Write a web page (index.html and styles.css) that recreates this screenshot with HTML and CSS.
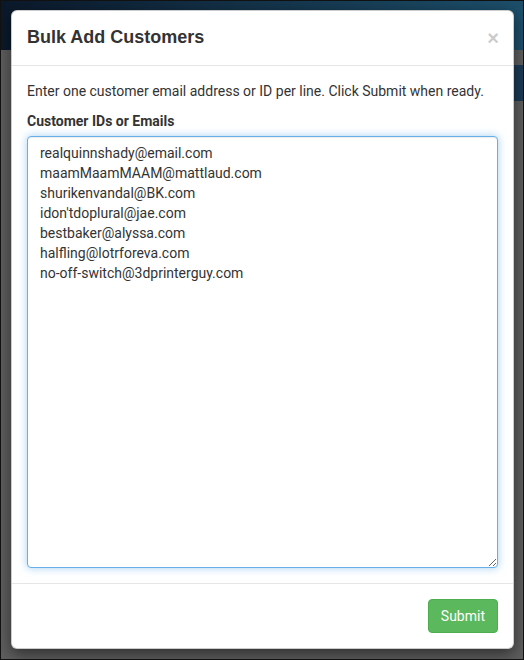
FILE: index.html
```html
<!DOCTYPE html>
<html lang="en">
<head>
    <meta charset="UTF-8">
    <meta name="viewport" content="width=device-width, initial-scale=1.0">
    <title>Bulk Add Customers</title>
    <link rel="stylesheet" href="styles.css">
</head>
<body>
    <div class="screen">
        <!-- Modal -->
        <div class="modal-content">
            <div class="modal-header">
                <h4 class="modal-title">Bulk Add Customers</h4>
                <button class="close" type="button">&times;</button>
            </div>
            <div class="modal-body">
                <p>Enter one customer email address or ID per line. Click Submit when ready.</p>
                <label for="customers">Customer IDs or Emails</label>
                <textarea id="customers" class="form-control is-focused">realquinnshady@email.com
maamMaamMAAM@mattlaud.com
shurikenvandal@BK.com
idon'tdoplural@jae.com
bestbaker@alyssa.com
halfling@lotrforeva.com
no-off-switch@3dprinterguy.com</textarea>
            </div>
            <div class="modal-footer">
                <button class="btn btn-success" type="button">Submit</button>
            </div>
        </div>
    </div>
</body>
</html>
```

FILE: styles.css
```css
body {
    margin: 0;
    padding: 0;
    font-family: Roboto, "Liberation Sans", Arial, sans-serif;
    font-size: 14px;
    line-height: 20px;
    color: #333;
}

/* Page behind the backdrop */
.screen {
    width: 524px;
    height: 660px;
    box-sizing: border-box;
    border: 1px solid #111;
    padding: 9px 10px 0 10px;
    background:
        linear-gradient(to right, #0b192b, #1d4f6b) top left / 100% 49px no-repeat,
        linear-gradient(#1c3b56, #1c3b56) right top 64px / 40px 36px no-repeat,
        #5e5e5e;
    overflow: hidden;
}

/* Modal */
.modal-content {
    width: 503px;
    box-sizing: border-box;
    background: #fff;
    border: 1px solid rgba(0, 0, 0, 0.2);
    border-radius: 6px;
    box-shadow: 0 5px 15px rgba(0, 0, 0, 0.5);
}

.modal-header {
    display: flex;
    justify-content: space-between;
    align-items: center;
    padding: 13px 15px 15px;
    border-bottom: 1px solid #e5e5e5;
}

.modal-title {
    margin: 0;
    font-family: "Liberation Sans", Arial, sans-serif;
    font-size: 18px;
    font-weight: bold;
    line-height: 26px;
    color: #333;
}

.close {
    background: none;
    border: none;
    padding: 0;
    margin: 1px -1px 0 0;
    font-family: "Liberation Sans", Arial, sans-serif;
    font-size: 20px;
    font-weight: bold;
    line-height: 1;
    color: #000;
    opacity: 0.2;
    cursor: pointer;
}

.modal-body {
    padding: 15px;
}

.modal-body p {
    margin: 0 0 10px;
}

.modal-body label {
    display: block;
    margin-bottom: 5px;
    font-weight: bold;
}

.form-control {
    display: block;
    width: 100%;
    height: 432px;
    box-sizing: border-box;
    padding: 6px 12px;
    font-family: Roboto, "Liberation Sans", Arial, sans-serif;
    font-size: 14px;
    line-height: 20px;
    color: #333;
    border: 1px solid #ccc;
    border-radius: 4px;
    resize: vertical;
    box-shadow: inset 0 1px 1px rgba(0, 0, 0, 0.075);
}

.form-control.is-focused {
    border-color: #66afe9;
    outline: 0;
    box-shadow: inset 0 1px 1px rgba(0, 0, 0, 0.075), 0 0 8px rgba(102, 175, 233, 0.6);
}

.modal-footer {
    display: flex;
    justify-content: flex-end;
    padding: 15px;
    border-top: 1px solid #e5e5e5;
}

.btn {
    padding: 6px 12px;
    font-family: Roboto, "Liberation Sans", Arial, sans-serif;
    font-size: 14px;
    line-height: 20px;
    border: 1px solid transparent;
    border-radius: 4px;
    cursor: pointer;
}

.btn-success {
    color: #fff;
    background: #5cb85c;
    border-color: #4cae4c;
}
```
